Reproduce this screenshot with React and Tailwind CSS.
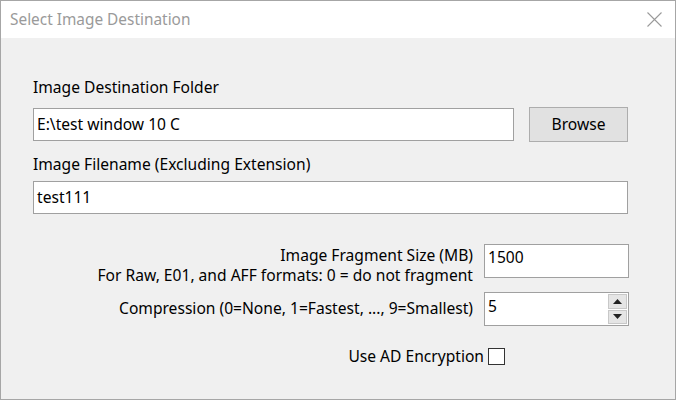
import React from "react";

const FONT = { fontFamily: '"Noto Sans", "Open Sans", sans-serif' };

function TextBox({ value, className = "" }) {
  return (
    <div className={`h-[33px] bg-white border border-[#a0a0a0] flex items-center px-[3px] text-[15.6px] text-black ${className}`}>
      {value}
    </div>
  );
}

function SpinBox({ value }) {
  return (
    <div className="w-[145px] h-[34px] bg-white border border-[#a0a0a0] flex items-stretch">
      <div className="flex-1 flex items-start pt-[2px] pl-[3px] text-[15.6px] text-black">{value}</div>
      <div className="w-[21px] flex flex-col gap-[1px] p-[1px]">
        <div className="flex-1 bg-[#e5e5e5] border border-[#c8c8c8] flex items-center justify-center">
          <svg width="9" height="5" viewBox="0 0 9 5"><path d="M4.5 0L9 5H0z" fill="#222" /></svg>
        </div>
        <div className="flex-1 bg-[#e5e5e5] border border-[#c8c8c8] flex items-center justify-center">
          <svg width="9" height="5" viewBox="0 0 9 5"><path d="M0 0h9L4.5 5z" fill="#222" /></svg>
        </div>
      </div>
    </div>
  );
}

export default function App() {
  return (
    <div className="w-[676px] h-[400px] bg-white border border-[#a6a6a6] flex flex-col overflow-hidden" style={FONT}>
      {/* Title bar */}
      <div className="h-[37px] shrink-0 flex items-center justify-between pl-[9px] pr-[13px]">
        <span className="text-[15.4px] text-[#9a9a9a]">Select Image Destination</span>
        <svg width="15" height="15" viewBox="0 0 15 15" stroke="#9a9a9a" strokeWidth="1.1">
          <path d="M0.5 0.5L14.5 14.5M14.5 0.5L0.5 14.5" />
        </svg>
      </div>

      {/* Body */}
      <div className="flex-1 bg-[#f0f0f0] pl-[32px] pr-[46px] pt-[38px] text-[15.6px] text-black">
        <div className="leading-[22px]">Image Destination Folder</div>
        <div className="flex items-center mt-[9px]">
          <TextBox value="E:\test window 10 C" className="w-[481px]" />
          <button className="ml-[15px] w-[99px] h-[35px] bg-[#e1e1e1] border border-[#adadad] text-[15.6px]">
            Browse
          </button>
        </div>
        <div className="leading-[22px] mt-[11px]">Image Filename (Excluding Extension)</div>
        <TextBox value="test111" className="mt-[6px] w-[595px]" />

        <div className="flex items-start mt-[30px]">
          <div className="w-[440px] text-right leading-[20px] pt-[1px]">
            <div>Image Fragment Size (MB)</div>
            <div>For Raw, E01, and AFF formats: 0 = do not fragment</div>
          </div>
          <TextBox value="1500" className="ml-[11px] w-[145px] !h-[34px] !items-start pt-[1px]" />
        </div>

        <div className="flex items-center mt-[7px]">
          <div className="w-[440px] text-right">Compression (0=None, 1=Fastest, ..., 9=Smallest)</div>
          <div className="ml-[11px]">
            <SpinBox value="5" />
          </div>
        </div>

        <div className="flex items-center mt-[19px]">
          <div className="w-[451px] text-right">Use AD Encryption</div>
          <div className="ml-[4px] w-[17px] h-[17px] bg-white border border-[#333]" />
        </div>
      </div>
    </div>
  );
}
